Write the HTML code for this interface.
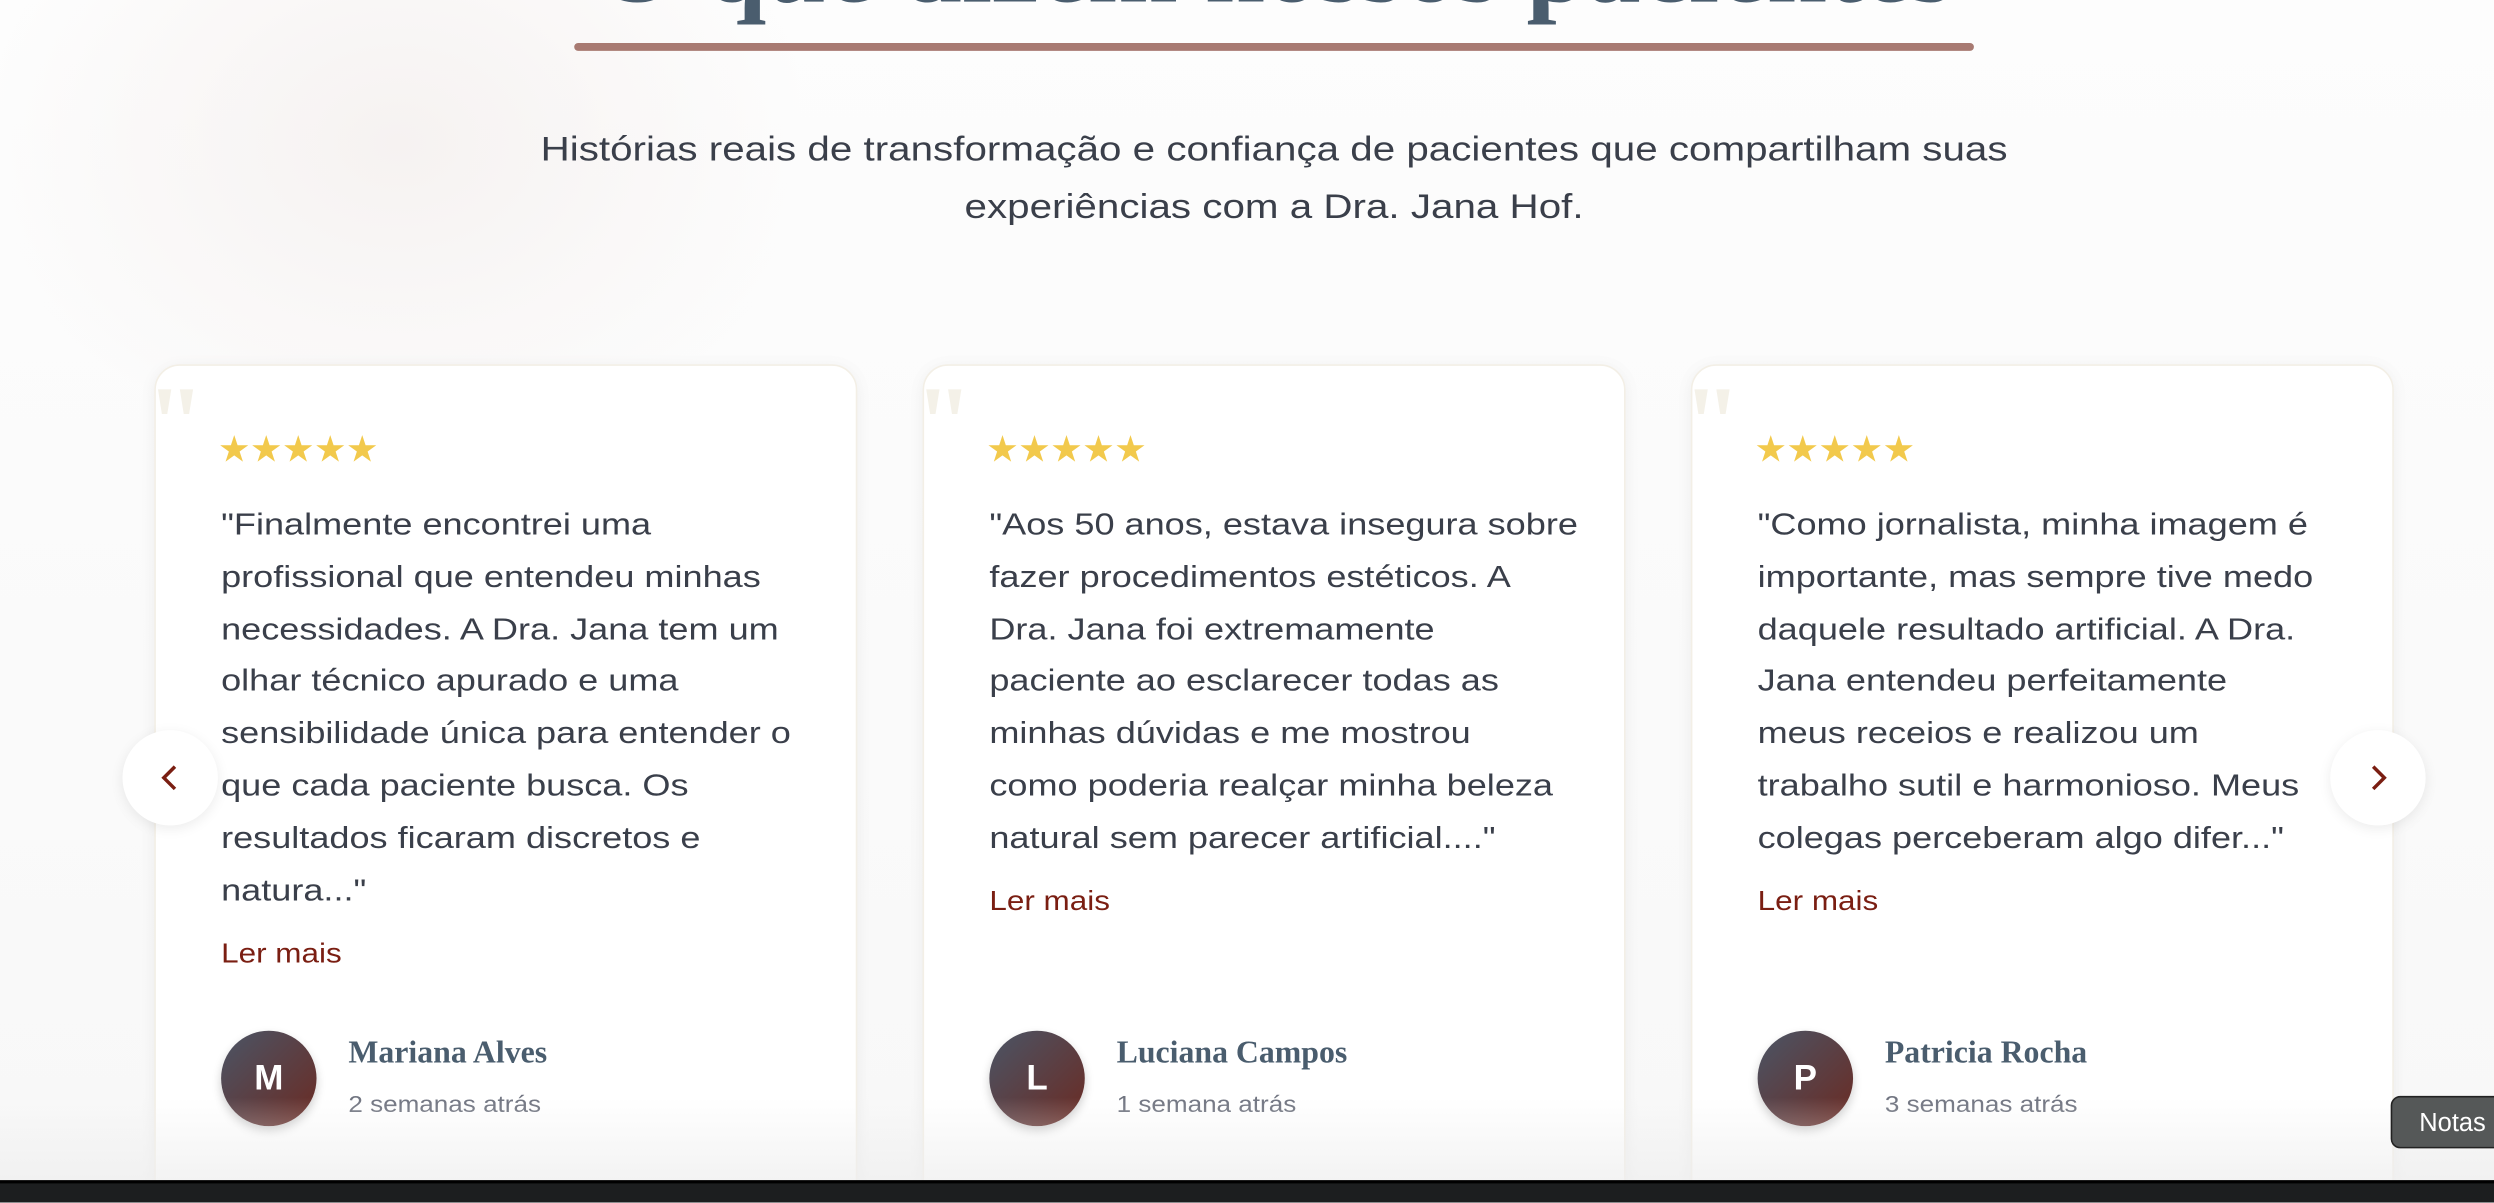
<!DOCTYPE html>
<html><head><meta charset="utf-8"><style>
*{margin:0;padding:0;box-sizing:border-box}
html,body{width:2494px;height:1202px;overflow:hidden;background:#fbfbfb}
#w{position:absolute;left:0;top:0;width:1568px;height:756px;transform:scale(1.5906);transform-origin:0 0;overflow:hidden;
background:radial-gradient(ellipse 260px 200px at 250px 90px,#f6f2f1 0%,rgba(250,249,249,0) 100%),linear-gradient(#fdfdfd,#f8f8f8);font-family:"Liberation Sans",sans-serif}
.title{position:absolute;left:0;width:1602px;text-align:center;top:-56px;font:bold 68px/1 "Liberation Serif",serif;color:#4a5d6e;white-space:nowrap}
.ul{position:absolute;left:361px;top:27px;width:880px;height:5px;border-radius:3px;background:#a87a72}
.sub{position:absolute;left:0;width:1602px;text-align:center;top:76px;font-size:21.5px;line-height:36px;color:#3a3f4a;transform:scaleX(1.18);transform-origin:801px 0}
.card{position:absolute;top:229px;width:442px;height:560px;background:#fff;border-radius:16px;box-shadow:0 2px 10px rgba(0,0,0,.06);border:1px solid #f3efe6}
.q{position:absolute;left:-6px;top:4px;font:bold 66px/1 "Liberation Serif",serif;color:#f4f1e8}
.stars{position:absolute;left:39px;top:39px;color:#f2c94c;font-size:23px;letter-spacing:-0.5px}
.txt{position:absolute;left:41px;top:84px;font-size:19.4px;line-height:32.8px;color:#3a3f4a;white-space:nowrap;transform:scaleX(1.17);transform-origin:0 0}
.lm{position:absolute;left:41px;font-size:17.5px;color:#7a1e12;transform:scaleX(1.13);transform-origin:0 0}
.av{position:absolute;left:41px;top:418px;width:60px;height:60px;border-radius:50%;background:linear-gradient(135deg,#4a5566,#6b2a22);color:#fff;font:bold 22px/60px "Liberation Sans",sans-serif;text-align:center;box-shadow:0 3px 6px rgba(0,0,0,.2)}
.nm{position:absolute;left:121px;top:421px;font:bold 20px "Liberation Serif",serif;color:#4a5d6e}
.dt{position:absolute;left:121px;top:457px;font-size:14.5px;color:#707480;transform:scaleX(1.13);transform-origin:0 0}
.arr{position:absolute;top:459px;width:60px;height:60px;border-radius:50%;background:#fff;box-shadow:0 2px 8px rgba(0,0,0,.08)}
.arr svg{position:absolute;left:20px;top:20px}
.fade{position:absolute;left:0;top:690px;width:1568px;height:52px;background:linear-gradient(rgba(245,245,245,0),rgba(238,238,238,.7))}
.bar{position:absolute;left:0;top:742px;width:1568px;height:14px;background:#1c1e1f;border-top:2px solid #000}
.notas{position:absolute;left:1503px;top:689px;width:80px;height:33px;background:#555858;border:1px solid #222;border-radius:6px;color:#fff;font-size:16px;line-height:33px;padding-left:17px}
</style></head><body><div id="w">
<div class="title">O que dizem nossos pacientes</div>
<div class="ul"></div>
<div class="sub">Histórias reais de transformação e confiança de pacientes que compartilham suas<br>experiências com a Dra. Jana Hof.</div>

<div class="card" style="left:97px"><div class="q">"</div><div class="stars">★★★★★</div>
<div class="txt">"Finalmente encontrei uma<br>profissional que entendeu minhas<br>necessidades. A Dra. Jana tem um<br>olhar técnico apurado e uma<br>sensibilidade única para entender o<br>que cada paciente busca. Os<br>resultados ficaram discretos e<br>natura..."</div>
<div class="lm" style="top:359px">Ler mais</div>
<div class="av">M</div><div class="nm">Mariana Alves</div><div class="dt">2 semanas atrás</div></div>

<div class="card" style="left:580px"><div class="q">"</div><div class="stars">★★★★★</div>
<div class="txt">"Aos 50 anos, estava insegura sobre<br>fazer procedimentos estéticos. A<br>Dra. Jana foi extremamente<br>paciente ao esclarecer todas as<br>minhas dúvidas e me mostrou<br>como poderia realçar minha beleza<br>natural sem parecer artificial...."</div>
<div class="lm" style="top:326px">Ler mais</div>
<div class="av">L</div><div class="nm">Luciana Campos</div><div class="dt">1 semana atrás</div></div>

<div class="card" style="left:1063px"><div class="q">"</div><div class="stars">★★★★★</div>
<div class="txt">"Como jornalista, minha imagem é<br>importante, mas sempre tive medo<br>daquele resultado artificial. A Dra.<br>Jana entendeu perfeitamente<br>meus receios e realizou um<br>trabalho sutil e harmonioso. Meus<br>colegas perceberam algo difer..."</div>
<div class="lm" style="top:326px">Ler mais</div>
<div class="av">P</div><div class="nm">Patricia Rocha</div><div class="dt">3 semanas atrás</div></div>

<div class="fade"></div>
<div class="arr" style="left:77px"><svg width="20" height="20" viewBox="0 0 20 20"><path d="M13 3 L6 10 L13 17" fill="none" stroke="#7a1e12" stroke-width="2.2"/></svg></div>
<div class="arr" style="left:1465px"><svg width="20" height="20" viewBox="0 0 20 20"><path d="M7 3 L14 10 L7 17" fill="none" stroke="#7a1e12" stroke-width="2.2"/></svg></div>
<div class="bar"></div>
<div class="notas">Notas</div>
</div></body></html>
